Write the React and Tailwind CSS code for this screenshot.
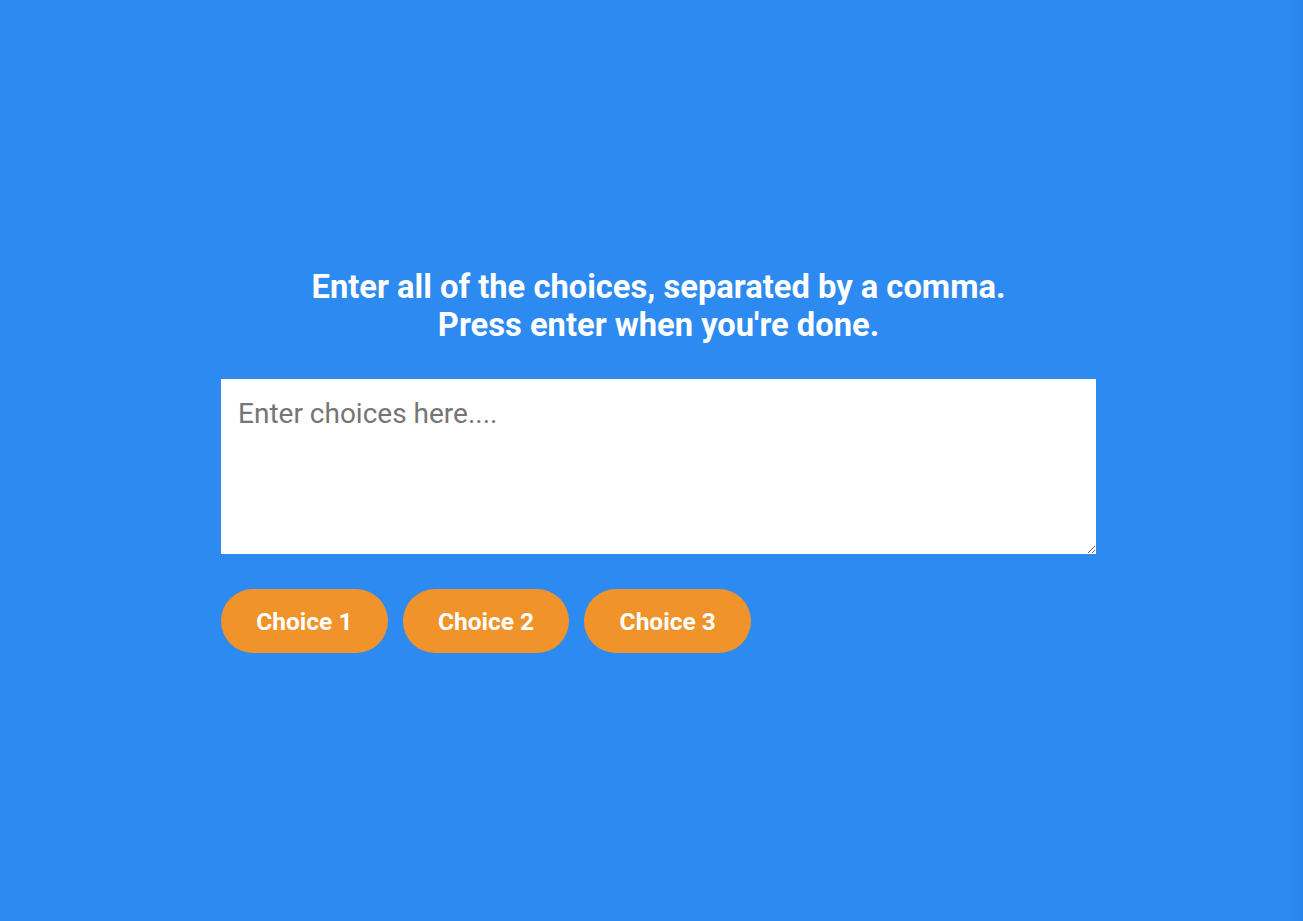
export default function App() {
    const choices = ["Choice 1", "Choice 2", "Choice 3"];

    return (
        <div
            className="min-h-[921px] w-full bg-[linear-gradient(to_right,#2d8af0_98.9%,#2a83e9)] font-['Roboto',sans-serif]"
        >
            <main className="pl-[221px] pt-[268px]">
                <div className="w-[875px]">
                    {/* Instructions */}
                    <h1 className="text-center text-[32.7px] font-bold leading-[38px] text-white">
                        Enter all of the choices, separated by a comma.
                        <br />
                        Press enter when you're done.
                    </h1>

                    {/* Input */}
                    <textarea
                        placeholder="Enter choices here...."
                        className="mt-[35px] block h-[175px] w-[875px] resize-y bg-white px-[17px] pt-[17px] pb-[15px] text-[28px] leading-[36px] text-gray-800 outline-none placeholder:text-[#757575]"
                    />

                    {/* Choice pills */}
                    <div className="mt-[35px] flex gap-[15px]">
                        {choices.map((c) => (
                            <span
                                key={c}
                                className="flex h-[64px] w-[166.7px] items-center justify-center rounded-full bg-[#f0932b] pt-[2px] text-[24.5px] font-bold text-white"
                            >
                                {c}
                            </span>
                        ))}
                    </div>
                </div>
            </main>
        </div>
    );
}
